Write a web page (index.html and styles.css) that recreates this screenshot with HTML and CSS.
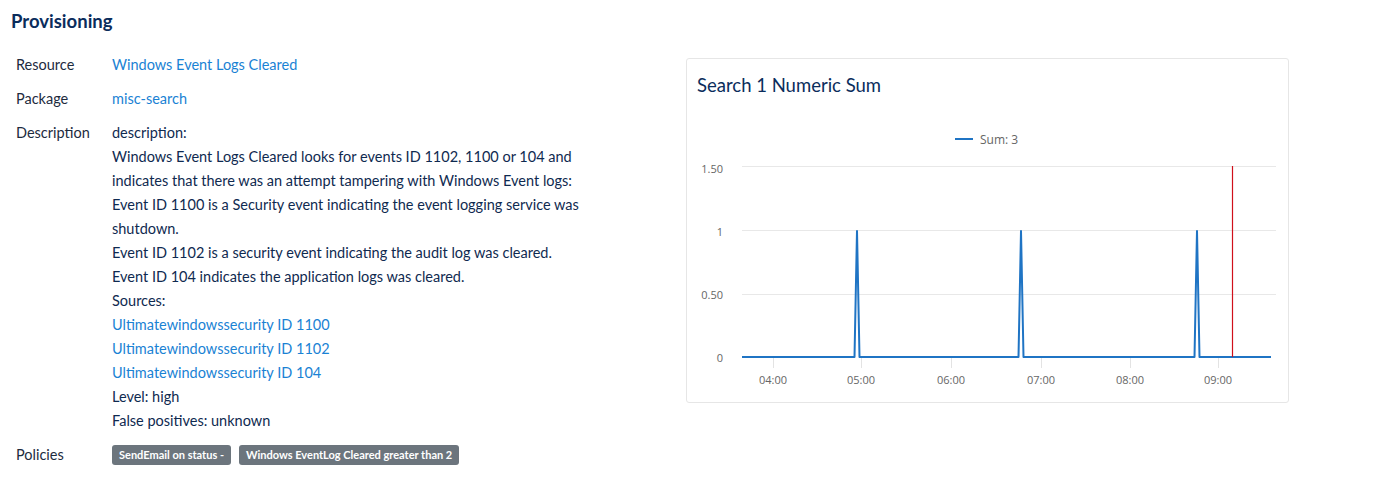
FILE: index.html
```html
<!DOCTYPE html>
<html lang="en">
<head>
    <meta charset="UTF-8">
    <title>Provisioning</title>
    <link rel="stylesheet" href="styles.css">
</head>
<body>
    <div class="page">
        <h2 class="page-title">Provisioning</h2>

        <div class="content">
            <div class="details-col">
                <table class="details">
                    <tr>
                        <td class="label">Resource</td>
                        <td class="value"><a href="#">Windows Event Logs Cleared</a></td>
                    </tr>
                    <tr>
                        <td class="label">Package</td>
                        <td class="value"><a href="#">misc-search</a></td>
                    </tr>
                    <tr>
                        <td class="label">Description</td>
                        <td class="value desc">
                            description:<br>
                            Windows Event Logs Cleared looks for events ID 1102, 1100 or 104 and indicates that there was an attempt tampering with Windows Event logs:<br>
                            Event ID 1100 is a Security event indicating the event logging service was shutdown.<br>
                            Event ID 1102 is a security event indicating the audit log was cleared.<br>
                            Event ID 104 indicates the application logs was cleared.<br>
                            Sources:<br>
                            <a href="#">Ultimatewindowssecurity ID 1100</a><br>
                            <a href="#">Ultimatewindowssecurity ID 1102</a><br>
                            <a href="#">Ultimatewindowssecurity ID 104</a><br>
                            Level: high<br>
                            False positives: unknown
                        </td>
                    </tr>
                    <tr>
                        <td class="label">Policies</td>
                        <td class="value">
                            <div class="badges">
                                <span class="badge">SendEmail on status -</span>
                                <span class="badge">Windows EventLog Cleared greater than 2</span>
                            </div>
                        </td>
                    </tr>
                </table>
            </div>

            <div class="chart-card">
                <div class="chart-title">Search 1 Numeric Sum</div>
                <svg class="chart" width="601" height="299" viewBox="687 103 601 299">
                    <!-- legend -->
                    <line x1="955" y1="139" x2="973" y2="139" stroke="#1f74c4" stroke-width="2"/>
                    <text x="980" y="143.5" class="legend">Sum: 3</text>

                    <!-- grid -->
                    <g stroke="#e8e8e8" stroke-width="1">
                        <line x1="742" y1="166.5" x2="1276" y2="166.5"/>
                        <line x1="742" y1="230.5" x2="1276" y2="230.5"/>
                        <line x1="742" y1="294.5" x2="1276" y2="294.5"/>
                    </g>
                    <g stroke="#e3e3e3" stroke-width="1">
                        <line x1="773.5" y1="357" x2="773.5" y2="368"/>
                        <line x1="861.5" y1="357" x2="861.5" y2="368"/>
                        <line x1="951.5" y1="357" x2="951.5" y2="368"/>
                        <line x1="1041.5" y1="357" x2="1041.5" y2="368"/>
                        <line x1="1130.5" y1="357" x2="1130.5" y2="368"/>
                        <line x1="1218.5" y1="357" x2="1218.5" y2="368"/>
                    </g>

                    <!-- y labels -->
                    <g class="axis" text-anchor="end">
                        <text x="723" y="173">1.50</text>
                        <text x="723" y="236">1</text>
                        <text x="723" y="299">0.50</text>
                        <text x="723" y="362">0</text>
                    </g>

                    <!-- x labels -->
                    <g class="axis" text-anchor="middle">
                        <text x="773" y="384">04:00</text>
                        <text x="861" y="384">05:00</text>
                        <text x="951" y="384">06:00</text>
                        <text x="1041" y="384">07:00</text>
                        <text x="1130" y="384">08:00</text>
                        <text x="1218" y="384">09:00</text>
                    </g>

                    <!-- series -->
                    <polyline fill="none" stroke="#1f74c4" stroke-width="2" stroke-linejoin="round"
                        points="742,357 854.5,357 857,231 859.5,357 1018.5,357 1021,231 1023.5,357 1194.5,357 1197,231 1199.5,357 1271,357"/>

                    <!-- now marker -->
                    <line x1="1232.5" y1="166" x2="1232.5" y2="357" stroke="#d0101b" stroke-width="1.2"/>
                </svg>
            </div>
        </div>
    </div>
</body>
</html>
```

FILE: styles.css
```css
* {
    margin: 0;
    padding: 0;
    box-sizing: border-box;
}

body {
    font-family: 'Lato', 'Open Sans', sans-serif;
    background: #fff;
    color: #0f2a50;
}

.page {
    padding: 10px 11px;
}

.page-title {
    font-size: 18.5px;
    font-weight: bold;
    color: #0b2d5c;
    line-height: 22px;
}

.content {
    display: flex;
    align-items: flex-start;
}

.details-col {
    width: 675px;
    flex-shrink: 0;
}

.details {
    border-collapse: collapse;
    margin-top: 16px;
    font-size: 14.5px;
    line-height: 24px;
}

.details td {
    padding: 5px;
    vertical-align: top;
}

.label {
    width: 96px;
    color: #1d2b3e;
}

.value {
    width: 500px;
    color: #0f2a50;
}

.value a {
    color: #1a82d4;
    text-decoration: none;
}

.badges {
    display: flex;
    gap: 8px;
    padding: 2px 0;
}

.badge {
    background: #6c757d;
    color: #fff;
    font-size: 11px;
    font-weight: bold;
    line-height: 20px;
    padding: 0 7px;
    border-radius: 3px;
}

.chart-card {
    width: 603px;
    height: 345px;
    margin-top: 26px;
    border: 1px solid #e6e6e6;
    border-radius: 3px;
}

.chart-title {
    font-size: 18.5px;
    color: #0b2d5c;
    line-height: 24px;
    padding: 14px 10px 6px;
}

.chart {
    display: block;
}

.chart text {
    font-family: 'Open Sans', sans-serif;
}

.legend {
    font-size: 12px;
    fill: #666;
}

.axis {
    font-size: 11px;
    fill: #666;
}
```
